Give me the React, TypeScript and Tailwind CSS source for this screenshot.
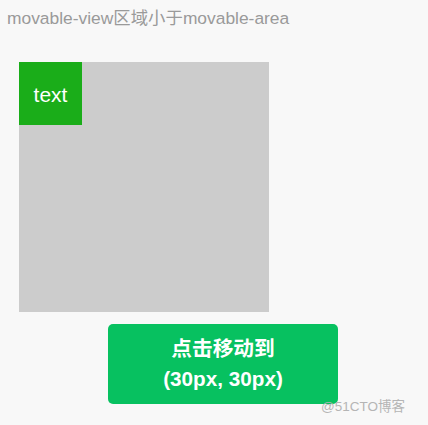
export default function App() {
  return (
    <div
      className="relative w-[428px] h-[425px] bg-[#f8f8f8] overflow-hidden"
      style={{ fontFamily: '"Liberation Sans", "Noto Sans CJK SC", sans-serif' }}
    >
      <div className="pt-[8px] pl-[7px] text-[17.4px] leading-[20px] text-[#9a9a9a]">
        movable-view区域小于movable-area
      </div>

      <div className="mt-[34px] ml-[19px] w-[250px] h-[250px] bg-[#cccccc]">
        <div className="w-[63px] h-[63px] bg-[#1aad19] flex items-center justify-center pt-[2px] text-white text-[21px]">
          text
        </div>
      </div>

      <button className="mt-[12px] ml-[108px] w-[230px] h-[80px] rounded-[5px] bg-[#07c160] text-white font-bold text-[20.7px] leading-[30px] flex flex-col items-center justify-center">
        <span>点击移动到</span>
        <span>(30px, 30px)</span>
      </button>

      <div className="absolute left-[321px] top-[397px] text-[13.5px] text-[#b5b5b5]">
        @51CTO博客
      </div>
    </div>
  );
}
